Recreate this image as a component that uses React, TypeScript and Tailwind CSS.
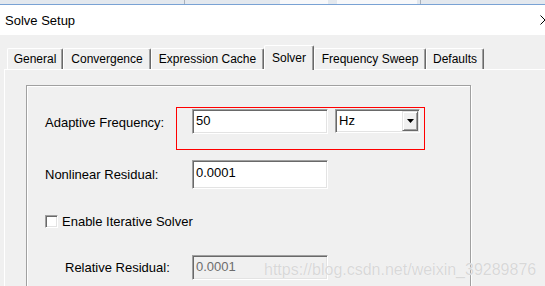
import React from "react";

const sunken =
  "border border-t-[#a0a0a0] border-l-[#a0a0a0] border-r-white border-b-white shadow-[inset_1px_1px_0_#696969,inset_-1px_-1px_0_#e3e3e3]";
const raised =
  "border border-t-[#e3e3e3] border-l-[#e3e3e3] border-r-[#696969] border-b-[#696969] shadow-[inset_1px_1px_0_#ffffff,inset_-1px_-1px_0_#a0a0a0]";

const tabs: { label: string; w: string; selected?: boolean }[] = [
  { label: "General", w: "w-[56px]" },
  { label: "Convergence", w: "w-[88px]" },
  { label: "Expression Cache", w: "w-[113px]" },
  { label: "Solver", w: "w-[50px]", selected: true },
  { label: "Frequency Sweep", w: "w-[112px]" },
  { label: "Defaults", w: "w-[58px]" },
];

export default function App() {
  return (
    <div className="relative w-[545px] h-[286px] overflow-hidden bg-[#f0f0f0] text-black font-['Liberation_Sans',Arial,sans-serif]">
      {/* top strip */}
      <div className="flex h-[5px] bg-[#e3e8ee] border-b border-[#79a2d4]">
        <div className="w-[184px]" />
        <div className="w-px bg-[#a9b1bc]" />
        <div className="w-[95px]" />
        <div className="w-[48px] bg-[#f7f8fa]" />
        <div className="w-[9px]" />
        <div className="w-[80px] bg-[#f7f8fa]" />
        <div className="w-[3px]" />
        <div className="w-px bg-[#a9b1bc]" />
      </div>

      {/* title bar */}
      <div className="flex h-[30px] items-start justify-between bg-white pl-[5px]">
        <div className="pt-[6px] text-[13px] leading-[20px]">Solve Setup</div>
        <svg width="10" height="10" viewBox="0 0 10 10" className="mt-[10px] -mr-[5px]">
          <path d="M0.5 0.5 L9.5 9.5 M9.5 0.5 L0.5 9.5" stroke="#000" strokeWidth="1" fill="none" />
        </svg>
      </div>

      {/* tabs */}
      <div className="relative z-10 flex items-end pl-[7px] pt-[10px] text-[12px]">
        {tabs.map((t) =>
          t.selected ? (
            <div
              key={t.label}
              className={`${t.w} h-[25px] pt-[2px] text-center leading-[20px] bg-[#f0f0f0] border-t border-l border-r border-t-white border-l-white border-r-[#696969] rounded-t-[2px] shadow-[inset_-1px_0_0_#a0a0a0]`}
            >
              {t.label}
            </div>
          ) : (
            <div
              key={t.label}
              className={`${t.w} h-[21px] mb-px text-center leading-[20px] bg-[#f0f0f0] border-t border-l border-r border-t-white border-l-white border-r-[#696969] rounded-t-[2px] shadow-[inset_-1px_0_0_#a0a0a0]`}
            >
              {t.label}
            </div>
          )
        )}
      </div>

      {/* pane */}
      <div className="-mt-px ml-[4px] h-[240px] border-t border-l border-white">
        {/* group box */}
        <div className="ml-[21px] mt-[15px] w-[445px] h-[260px] border border-[#a0a0a0] shadow-[inset_1px_1px_0_#ffffff,1px_1px_0_#ffffff] pl-[18px] text-[13px] leading-[19px]">
          {/* row 1 */}
          <div className="flex items-start mt-[21px]">
            <div className="w-[131px] mt-[6px]">Adaptive Frequency:</div>
            <div className="w-[249px] h-[43px] border border-[#ff0000] pl-[15px] pt-[1px] flex items-start">
              <div className={`w-[136px] h-[25px] bg-white pl-[3px] pt-[1px] ${sunken}`}>50</div>
              <div className={`ml-[7px] w-[85px] h-[24px] bg-white p-[1px] flex ${sunken}`}>
                <div className="flex-1 pl-[2px]">Hz</div>
                <div className={`w-[16px] h-[20px] bg-[#f0f0f0] flex items-center justify-center ${raised}`}>
                  <svg width="7" height="4" viewBox="0 0 7 4">
                    <path d="M0 0 H7 L3.5 4 Z" fill="#000" />
                  </svg>
                </div>
              </div>
            </div>
          </div>

          {/* row 2 */}
          <div className="flex items-start mt-[10px]">
            <div className="w-[147px] mt-[5px]">Nonlinear Residual:</div>
            <div className={`w-[136px] h-[29px] bg-white pl-[3px] pt-[2px] ${sunken}`}>0.0001</div>
          </div>

          {/* row 3 */}
          <div className="flex items-start mt-[23px]">
            <div className={`mt-[3px] w-[13px] h-[13px] bg-white ${sunken}`} />
            <div className="ml-[4px]">Enable Iterative Solver</div>
          </div>

          {/* row 4 */}
          <div className="flex items-start mt-[24px] pl-[20px]">
            <div className="w-[127px] mt-[3px]">Relative Residual:</div>
            <div className={`w-[136px] h-[25px] bg-[#f0f0f0] pl-[3px] pt-[1px] text-[#6d6d6d] ${sunken}`}>0.0001</div>
          </div>
        </div>
      </div>

      {/* watermark overlay */}
      <div className="absolute left-[264px] top-[261px] z-20 text-[16px] leading-[18px] text-[#d8d8d8] [text-shadow:0_0_1px_#ffffff] whitespace-nowrap">
        https://blog.csdn.net/weixin_39289876
      </div>
    </div>
  );
}
